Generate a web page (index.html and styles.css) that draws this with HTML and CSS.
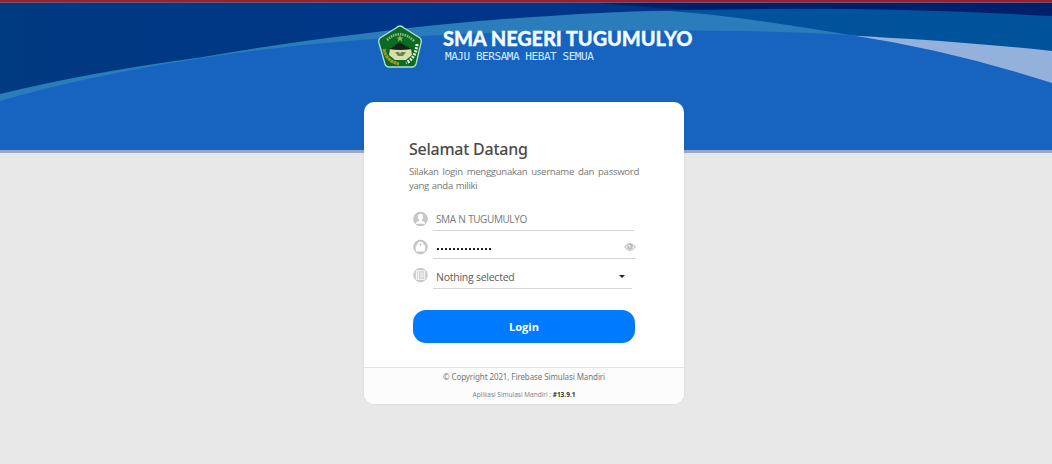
FILE: index.html
```html
<!DOCTYPE html>
<html lang="id">
  <head>
    <meta charset="UTF-8" />
    <meta name="viewport" content="width=device-width, initial-scale=1.0" />
    <title>SMA Negeri Tugumulyo</title>
    <link rel="stylesheet" href="styles.css">
  </head>
  <body>
    <header class="banner">
      <svg class="waves" viewBox="0 0 1052 150" preserveAspectRatio="none">
        <defs>
          <linearGradient id="navy" x1="0" y1="0" x2="1" y2="0">
            <stop offset="0" stop-color="#003a80" />
            <stop offset="0.5" stop-color="#00358a" />
            <stop offset="0.65" stop-color="#003384" />
          </linearGradient>
        </defs>
        <rect width="1052" height="150" fill="url(#navy)" />
        <path d="M600 3Q650 8 710 11L1052 25V0H600Z" fill="#00206c" />
        <path d="M620 12Q650 10 692 10Q870 6 1052 16V55H692Z" fill="#00529b" />
        <path d="M840 35Q960 41 1052 51V90Z" fill="#94b1dc" />
        <path d="M0 94Q90 72 200 57.500Q290 42 360 34Q460 21 550 16Q620 11 670 11Q740 16 850 35L800 60L0 110Z" fill="#2a7cba" />
        <path d="M0 101Q90 75 200 58.500Q280 46 360 40Q500 29 692 30.500Q790 31 850 35Q950 50 1052 83V150H0Z" fill="#1764c0" />
      </svg>
      <div class="brand">
        <svg class="logo" viewBox="0 0 44 44">
          <path d="M22 1Q24 1 26 3L42 13Q44 15 43 18L38 39Q37 42 34 42H11Q8 42 7 39L1 18Q0 15 2 13L18 3Q20 1 22 1Z" fill="#0b6b22" stroke="#b5dfcc" stroke-width="1.300" />
          <path d="M9 15Q22 3 36 16" fill="none" stroke="#8fbd88" stroke-width="2.500" stroke-dasharray="1.500 0.900" />
          <path d="M22 10l1 2.500h2.500l-2 1.500.8 2.500-2.300-1.500-2.300 1.500.8-2.500-2-1.500H21z" fill="#9ab653" />
          <path d="M12 24Q21 17 33 24L34 30L28 35H17L11 30Z" fill="#d9dfaa" />
          <path d="M11 24Q17 21 20 18Q23 17 26 20L34 24Q22 26 11 24Z" fill="#14251a" />
          <path d="M17 27h4l1 2 1-2h5l-3 4h-5z" fill="#6d8350" />
          <path d="M6 24Q8 36 21 39" fill="none" stroke="#a3982b" stroke-width="3" stroke-dasharray="3 0.400" />
          <path d="M39 19Q38 33 28 38" fill="none" stroke="#e5eee1" stroke-width="3" stroke-dasharray="2 1.200" />
        </svg>
        <div class="brand-text">
          <h1>SMA NEGERI TUGUMULYO</h1>
          <p>MAJU BERSAMA HEBAT SEMUA</p>
        </div>
      </div>
    </header>

    <main class="card">
      <div class="card-body">
        <h2>Selamat Datang</h2>
        <p class="intro">Silakan login menggunakan username dan password yang anda miliki</p>

        <form>
          <div class="field">
            <svg class="icon" viewBox="0 0 16 16">
              <circle cx="8" cy="8" r="7.200" fill="#c9c9c9" stroke="#bbb" />
              <path d="M8 2.500c-2 0-3 1.500-2.800 3.300.1 1.500.8 2.500 1.400 3v1.100L3.200 11.600V13h9.600v-1.400L9.400 9.900V8.800c.7-.6 1.300-1.500 1.400-3C11 4 10 2.500 8 2.500z" fill="#fff" />
            </svg>
            <div class="line">
              <span class="username">SMA N TUGUMULYO</span>
            </div>
          </div>
          <div class="field password">
            <svg class="icon" viewBox="0 0 16 16">
              <circle cx="8" cy="8" r="7.200" fill="#c9c9c9" stroke="#bbb" />
              <path d="M3 6.500h1.300C4.600 4 6 2.300 8 2.300s3.400 1.700 3.700 4.200H13v6.300H3z" fill="#fff" />
              <path d="M7 4.800h2M8 5v2" fill="none" stroke="#bbb" />
            </svg>
            <div class="line">
              <span class="dots"><i></i><i></i><i></i><i></i><i></i><i></i><i></i><i></i><i></i><i></i><i></i><i></i><i></i><i></i></span>
              <svg class="eye" viewBox="0 0 12 10">
                <path d="M.6 5Q6-1.800 11.400 5Q6 11.800.6 5Z" fill="#eee" stroke="#b5b5b5" />
                <circle cx="6" cy="4.500" r="2.300" fill="#ccc" stroke="#b5b5b5" />
                <circle cx="5.300" cy="3.800" r=".8" fill="#fff" />
              </svg>
            </div>
          </div>
          <div class="field select">
            <svg class="icon" viewBox="0 0 16 16">
              <circle cx="8" cy="8" r="7.200" fill="#c9c9c9" stroke="#c5c5c5" />
              <rect x="3.500" y="3.500" width="9" height="9" fill="#ccc" stroke="#fff" />
              <path d="M6 3.500v9M7.500 6h4M7.500 8h4M7.500 10h4M4 6h1M4 8h1M4 10h1" fill="none" stroke="#fff" stroke-width=".9" />
            </svg>
            <div class="line">
              <span class="selected">Nothing selected</span>
              <span class="caret"></span>
            </div>
          </div>
          <button type="button" class="login">Login</button>
        </form>
      </div>
      <footer>
        <p class="copyright">© Copyright 2021, Firebase Simulasi Mandiri</p>
        <p class="version">Aplikasi Simulasi Mandiri : <b>#13.9.1</b></p>
      </footer>
    </main>
  </body>
</html>
```
FILE: styles.css
```css
* {
  margin: 0;
  padding: 0;
  box-sizing: border-box;
}

body {
  height: 100vh;
  overflow: hidden;
  background-color: #e8e8e8;
  font-family: "Open Sans", "Noto Sans", sans-serif;
}

.banner {
  position: relative;
  height: 153px;
  border-top: 2px solid #9b202f;
  border-bottom: 3px solid #98a8c4;
  background-color: #1764c0;
}

.waves {
  position: absolute;
  top: -2px;
  left: 0;
  width: 100%;
  height: 150px;
  clip-path: inset(2px 0 0 0);
}

/* thin seam under the red bar */
.banner::before {
  content: "";
  position: absolute;
  z-index: 1;
  top: 0;
  left: 0;
  width: 100%;
  height: 1px;
  background-color: #6a5578;
}

.brand {
  position: relative;
  display: flex;
  width: 320px;
  margin: 0 auto;
  padding: 23px 0 0 12px;
}

.logo {
  width: 44px;
  height: 44px;
  flex: none;
}

.brand-text {
  margin-left: 21px;
  color: #f2fbff;
  white-space: nowrap;
}

.brand-text h1 {
  font-family: Lato, sans-serif;
  font-size: 20px;
  font-weight: 900;
  line-height: 26px;
  letter-spacing: -0.1px;
  -webkit-text-stroke: 0.3px #f2fbff;
}

.brand-text p {
  margin-left: 2px;
  font-family: "DejaVu Sans Mono", monospace;
  font-size: 11px;
  line-height: 11px;
  letter-spacing: -0.44px;
  color: #d5ecff;
}

.card {
  position: relative;
  width: 320px;
  height: 302px;
  margin: -51px auto 0;
  left: -2px;
  border-radius: 10px;
  background-color: #fff;
  box-shadow: 0 0 3px rgba(0, 0, 0, 0.08);
  overflow: hidden;
}

.card-body {
  height: 265px;
  padding: 36px 45px 0;
}

h2 {
  font-family: "Noto Sans", sans-serif;
  font-size: 16px;
  font-weight: 500;
  line-height: 23px;
  letter-spacing: -0.25px;
  color: #4a4a4a;
}

.intro {
  margin-top: 4px;
  font-size: 9.600px;
  line-height: 14px;
  letter-spacing: -0.3px;
  word-spacing: 0.5px;
  text-align: justify;
  color: #777;
}

form {
  padding-left: 4px;
}

.field {
  display: flex;
  height: 28px;
  margin-top: 10px;
}

.field.password {
  margin-top: 0;
}

.field.select {
  height: 30px;
  margin-top: 0;
}

.icon {
  width: 15px;
  height: 16px;
  margin-top: 8px;
}

.line {
  display: flex;
  align-items: center;
  justify-content: space-between;
  width: 201px;
  margin-left: 5px;
  padding-left: 3px;
  border-bottom: 1px solid #d5d5d5;
}

.password .line {
  width: 203px;
}

.select .line {
  width: 199px;
  padding-top: 6px;
}

.username {
  padding-top: 5px;
  font-size: 10px;
  letter-spacing: -0.4px;
  word-spacing: 0.5px;
  color: #777;
}

.dots {
  display: flex;
  gap: 2px;
  padding: 8px 0 0 1px;
}

.dots i {
  width: 2px;
  height: 2px;
  background-color: #222;
}

.eye {
  width: 12px;
  height: 10px;
  margin-top: 5px;
}

.selected {
  font-size: 10.500px;
  letter-spacing: -0.25px;
  color: #5c5c5c;
}

.caret {
  margin-right: 7px;
  border-top: 3px solid #222;
  border-right: 3px solid transparent;
  border-left: 3px solid transparent;
}

.login {
  display: block;
  width: 222px;
  height: 33px;
  margin-top: 21px;
  border: none;
  border-radius: 13px;
  background-color: #007bff;
  color: #fff;
  font-family: inherit;
  font-size: 11px;
  font-weight: bold;
  cursor: pointer;
}

footer {
  height: 37px;
  border-top: 1px solid #e5e5e5;
  background-color: #fcfcfc;
  text-align: center;
}

.copyright {
  padding-top: 2px;
  font-family: "Noto Sans", sans-serif;
  font-size: 8px;
  line-height: 14px;
  letter-spacing: -0.1px;
  color: #777;
}

.version {
  margin-top: 5px;
  font-size: 6.500px;
  line-height: 12px;
  color: #6e7f8d;
}

.version b {
  color: #333;
}
```
